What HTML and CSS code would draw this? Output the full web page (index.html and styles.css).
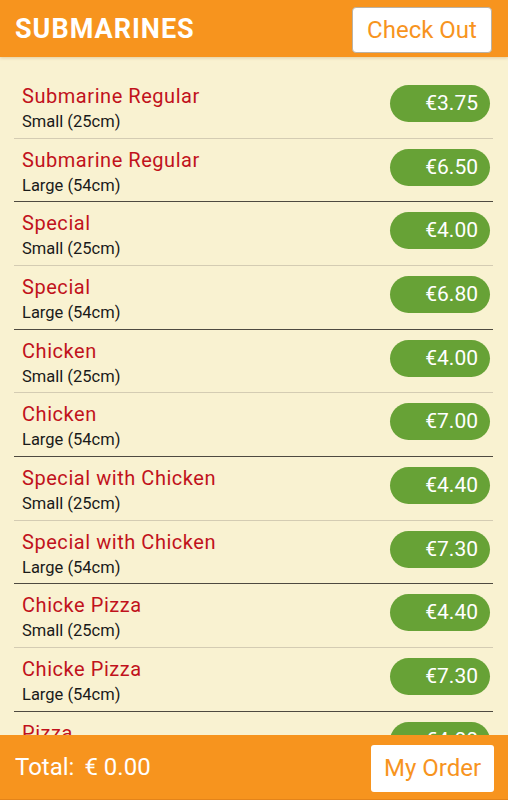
FILE: index.html
```html
<!DOCTYPE html>
<html lang="en">
<head>
  <meta charset="UTF-8" />
  <meta name="viewport" content="width=device-width, initial-scale=1.0"/>
  <title>Submarines</title>
  <link rel="stylesheet" href="styles.css">
</head>
<body>

  <header class="top-bar">
    <div class="page-title">SUBMARINES</div>
    <button class="bar-button checkout">Check Out</button>
  </header>

  <section class="menu-list">
    <div class="menu-item small">
      <div class="item-text">
        <div class="item-name">Submarine Regular</div>
        <div class="item-size">Small (25cm)</div>
      </div>
      <div class="item-price">€3.75</div>
    </div>
    <div class="menu-item large">
      <div class="item-text">
        <div class="item-name">Submarine Regular</div>
        <div class="item-size">Large (54cm)</div>
      </div>
      <div class="item-price">€6.50</div>
    </div>
    <div class="menu-item small">
      <div class="item-text">
        <div class="item-name">Special</div>
        <div class="item-size">Small (25cm)</div>
      </div>
      <div class="item-price">€4.00</div>
    </div>
    <div class="menu-item large">
      <div class="item-text">
        <div class="item-name">Special</div>
        <div class="item-size">Large (54cm)</div>
      </div>
      <div class="item-price">€6.80</div>
    </div>
    <div class="menu-item small">
      <div class="item-text">
        <div class="item-name">Chicken</div>
        <div class="item-size">Small (25cm)</div>
      </div>
      <div class="item-price">€4.00</div>
    </div>
    <div class="menu-item large">
      <div class="item-text">
        <div class="item-name">Chicken</div>
        <div class="item-size">Large (54cm)</div>
      </div>
      <div class="item-price">€7.00</div>
    </div>
    <div class="menu-item small">
      <div class="item-text">
        <div class="item-name">Special with Chicken</div>
        <div class="item-size">Small (25cm)</div>
      </div>
      <div class="item-price">€4.40</div>
    </div>
    <div class="menu-item large">
      <div class="item-text">
        <div class="item-name">Special with Chicken</div>
        <div class="item-size">Large (54cm)</div>
      </div>
      <div class="item-price">€7.30</div>
    </div>
    <div class="menu-item small">
      <div class="item-text">
        <div class="item-name">Chicke Pizza</div>
        <div class="item-size">Small (25cm)</div>
      </div>
      <div class="item-price">€4.40</div>
    </div>
    <div class="menu-item large">
      <div class="item-text">
        <div class="item-name">Chicke Pizza</div>
        <div class="item-size">Large (54cm)</div>
      </div>
      <div class="item-price">€7.30</div>
    </div>
    <div class="menu-item small">
      <div class="item-text">
        <div class="item-name">Pizza</div>
        <div class="item-size">Small (25cm)</div>
      </div>
      <div class="item-price">€4.00</div>
    </div>
  </section>

  <footer class="bottom-bar">
    <div class="total">
      <span class="total-label">Total:</span>
      <span class="total-value">€ 0.00</span>
    </div>
    <button class="bar-button my-order">My Order</button>
  </footer>

</body>
</html>
```

FILE: styles.css
```css
body {
  margin: 0;
  width: 508px;
  height: 800px;
  overflow: hidden;
  display: flex;
  flex-direction: column;
  font-family: Roboto, 'Noto Sans', sans-serif;
  background-color: #f9f2d1;
}

.top-bar {
  height: 57px;
  flex-shrink: 0;
  display: flex;
  align-items: center;
  justify-content: space-between;
  padding: 0 16px 0 15px;
  background-color: #f7941e;
  box-shadow: 0 1px 3px rgba(160, 90, 0, 0.25);
  position: relative;
  z-index: 1;
}

.page-title {
  font-size: 27px;
  font-weight: 700;
  color: #fff;
  letter-spacing: 1px;
}

.bar-button {
  font-family: Roboto, 'Noto Sans', sans-serif;
  font-size: 24px;
  color: #f7941e;
  background: #fff;
  border-radius: 4px;
  padding: 0;
  cursor: pointer;
}

.checkout {
  width: 140px;
  height: 46px;
  margin-top: 2px;
  border: 1px solid #b9b2a6;
}

.menu-list {
  flex: 1;
  overflow: hidden;
  padding-top: 18px;
}

.menu-item {
  height: 63.67px;
  box-sizing: border-box;
  margin: 0 15px 0 14px;
  padding: 0 3px 0 8px;
  display: flex;
  align-items: flex-start;
  justify-content: space-between;
}

.menu-item.small {
  border-bottom: 1px solid #d4ccb3;
}

.menu-item.large {
  border-bottom: 1px solid #4e4a40;
}

.item-text {
  padding-top: 9px;
}

.item-name {
  font-size: 20px;
  line-height: 24px;
  letter-spacing: 0.55px;
  color: #c1121c;
}

.item-size {
  font-size: 16.5px;
  line-height: 22px;
  margin-top: 3px;
  color: #1a1a1a;
}

.item-price {
  margin-top: 10px;
  width: 100px;
  height: 37px;
  box-sizing: border-box;
  padding-right: 12px;
  border-radius: 19px;
  background-color: #67a236;
  color: #fff;
  font-size: 21px;
  line-height: 37px;
  text-align: right;
}

.bottom-bar {
  height: 65px;
  flex-shrink: 0;
  box-sizing: border-box;
  display: flex;
  align-items: center;
  justify-content: space-between;
  padding: 0 14px 0 15px;
  background-color: #f7941e;
  border-bottom: 1px solid #e4841a;
}

.total {
  display: flex;
  gap: 10px;
  font-size: 24px;
  color: #fff;
}

.my-order {
  width: 123px;
  height: 47px;
  margin-top: 2px;
  border: none;
  border-radius: 3px;
}
```
